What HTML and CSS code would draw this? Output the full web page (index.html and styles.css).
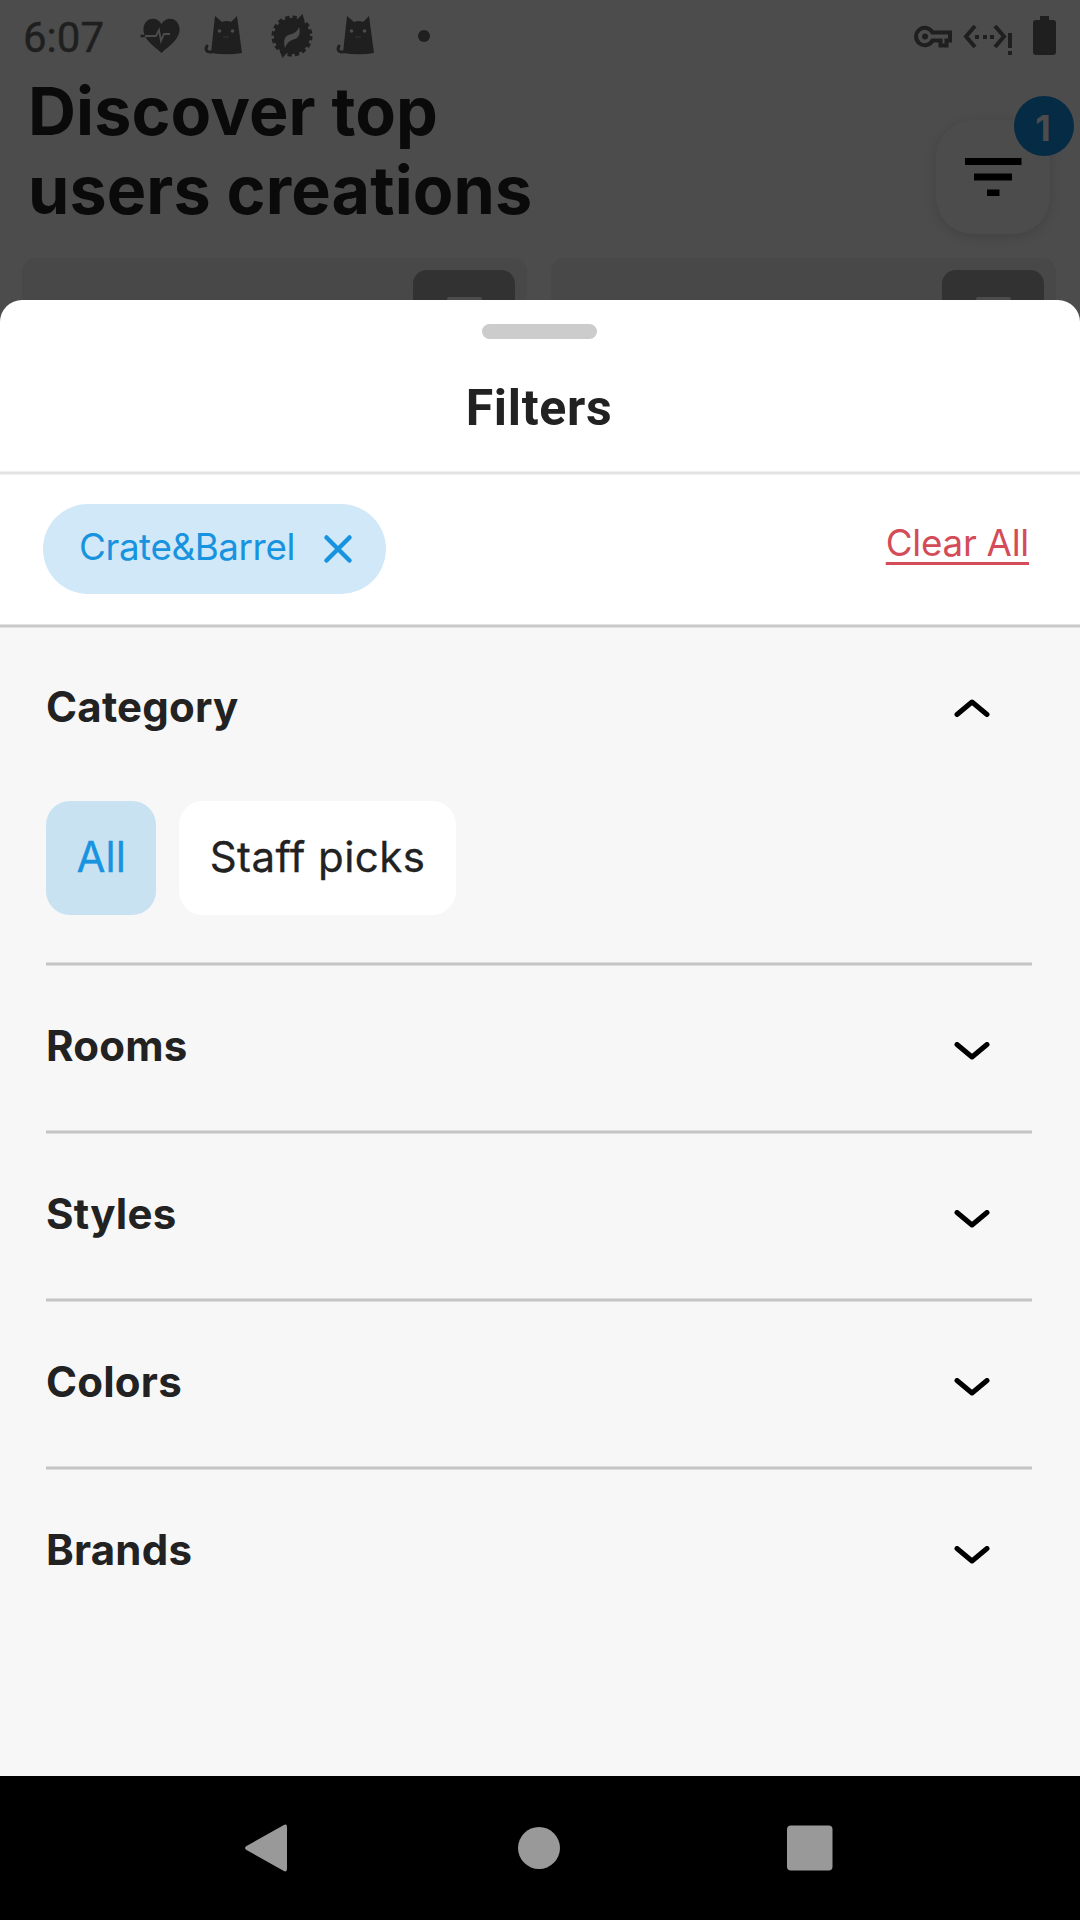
FILE: index.html
```html
<!DOCTYPE html>
<html lang="en">
<head>
<meta charset="utf-8">
<title>Filters</title>
<link rel="stylesheet" href="styles.css">
</head>
<body>
<main class="screen">
  <section class="backdrop">
    <div class="status">
      <span class="clock">6:07</span>
      <svg class="status-left" width="310" height="72" viewBox="0 0 310 72">
        <g fill="#1f1f1f">
          <path d="M41.500 53C34 46 22.500 39 23.500 28C25 17 37 16 41.500 24C46 16 58 17 59.500 28C60.500 39 49 46 41.500 53Z"/>
          <g id="cat">
            <path d="M91 53L95 16L102 22Q107 20 111 22L117 16L122 53Q107 55.500 91 53Z"/>
            <path d="M87 46Q84 52 91 52" fill="none" stroke="#1f1f1f" stroke-width="3" stroke-linecap="round"/>
            <circle cx="99.500" cy="31" r="1.800" fill="#4c4c4c"/><circle cx="112.500" cy="31" r="1.800" fill="#4c4c4c"/>
            <path d="M103 37H109" stroke="#2f2f2f" stroke-width="1.500"/>
          </g>
          <use href="#cat" x="132"/>
          <circle cx="172" cy="36" r="18"/>
          <circle cx="172" cy="36" r="18.500" fill="none" stroke="#1f1f1f" stroke-width="4" stroke-dasharray="4.200 3.064"/>
          <path d="M173 24L182.500 14L186 27ZM171 48L162.500 58L158 46Z"/>
          <circle cx="304" cy="36" r="6"/>
        </g>
        <path d="M20 36H36L39 30L41 41L44 34H50" fill="none" stroke="#4c4c4c" stroke-width="1.800"/>
        <path d="M20.500 36H25" stroke="#1f1f1f" stroke-width="2.500"/>
        <path d="M179 27Q182 38 172 40Q167 42 165 48Q162 36 170 34.500Q177 33 179 27Z" fill="#4c4c4c"/>
      </svg>
      <svg class="status-right" width="160" height="72" viewBox="0 0 160 72">
        <g fill="none" stroke="#1f1f1f" stroke-width="4">
          <path d="M32.500 32.500A8.700 8.700 0 1 0 32.500 40.500H40.500V45.500H46.500V40.500H50V32.500Z"/>
          <path d="M75 26L66 36.500L75 47M95 26L104 36.500L95 47"/>
        </g>
        <g fill="#1f1f1f">
          <circle cx="25" cy="36.500" r="3"/>
          <path d="M75 35h4v4h-4zM83 35h4v4h-4zM90 35h4v4h-4zM108 33h4v15h-4zM108 51h4v4h-4z"/>
          <path d="M140 16h9v4h4a3 3 0 0 1 3 3v29a3 3 0 0 1-3 3h-17a3 3 0 0 1-3-3v-29a3 3 0 0 1 3-3h4z"/>
        </g>
      </svg>
    </div>
    <div class="heading">
      <h1 class="title">Discover top<br>users creations</h1>
      <div class="filter-button">
        <svg width="58" height="40" viewBox="0 0 58 40"><path d="M1 1h56.500v7H1zM10 16.500h38v7H10zM23 32.500h12.500v6.500H23z"/></svg>
        <span class="badge">1</span>
      </div>
    </div>
    <div class="cards">
      <div class="card"><div class="card-action"><i class="dash"></i></div></div>
      <div class="card"><div class="card-action"><i class="dash"></i></div></div>
    </div>
  </section>
  <section class="sheet">
    <header class="sheet-head">
      <div class="handle"></div>
      <h2 class="sheet-title">Filters</h2>
    </header>
    <div class="applied">
      <div class="tag"><span class="tag-label">Crate&amp;Barrel</span>
        <svg width="30" height="30" viewBox="0 0 30 30"><path d="M3.500 3.500L26.500 26.500M26.500 3.500L3.500 26.500" fill="none" stroke="#1793e0" stroke-width="4.500" stroke-linecap="round"/></svg>
      </div>
      <a class="clear">Clear All</a>
    </div>
    <div class="groups">
      <div class="group">
        <div class="row first"><h3>Category</h3><svg class="chev" width="36" height="18" viewBox="0 0 36 18"><path d="M3 15.500L18 3L33 15.500"/></svg></div>
        <div class="chips"><span class="chip on">All</span><span class="chip">Staff picks</span></div>
      </div>
      <div class="group row"><h3>Rooms</h3><svg class="chev" width="36" height="18" viewBox="0 0 36 18"><path d="M3 2.500L18 15L33 2.500"/></svg></div>
      <div class="group row"><h3>Styles</h3><svg class="chev" width="36" height="18" viewBox="0 0 36 18"><path d="M3 2.500L18 15L33 2.500"/></svg></div>
      <div class="group row"><h3>Colors</h3><svg class="chev" width="36" height="18" viewBox="0 0 36 18"><path d="M3 2.500L18 15L33 2.500"/></svg></div>
      <div class="group row"><h3>Brands</h3><svg class="chev" width="36" height="18" viewBox="0 0 36 18"><path d="M3 2.500L18 15L33 2.500"/></svg></div>
    </div>
  </section>
  <nav class="navbar">
    <svg width="44" height="50" viewBox="0 0 44 50"><path d="M2.500 23L39 2.500Q43 0 43 4V46Q43 50 39 47.500L2.500 27Q-0.500 25 2.500 23Z"/></svg>
    <svg width="44" height="42" viewBox="0 0 44 42"><circle cx="23" cy="21" r="21"/></svg>
    <svg width="46" height="46" viewBox="0 0 46 46"><rect x="0" y="0.500" width="45.500" height="45" rx="4"/></svg>
  </nav>
</main>
</body>
</html>
```
FILE: styles.css
```css
* { box-sizing: border-box; margin: 0; padding: 0; }
body { background: #4c4c4c; font-family: Inter, "Liberation Sans", sans-serif; color: #222; }
.screen { width: 1080px; height: 1920px; display: flex; flex-direction: column; overflow: hidden; }

/* Dimmed page behind the sheet */
.backdrop { height: 322px; overflow: hidden; flex: none; }
.status { height: 72px; display: flex; padding: 0 20px 0 22px; }
.clock { font: 400 42px/75px Roboto, sans-serif; color: #1f1f1f; width: 98px; flex: none; padding-left: 1px; -webkit-text-stroke: .4px #1f1f1f; }
.status-left { margin-right: auto; }
.heading { height: 186px; display: flex; justify-content: space-between; padding: 0 30px 0 28px; }
.title { font-size: 66.4px; line-height: 79px; font-weight: 700; color: #0a0a0a; letter-spacing: .1px; }
.filter-button { position: relative; width: 114px; height: 114px; margin-top: 48px; border-radius: 37px; background: #4c4c4c; box-shadow: 0 3px 12px rgba(0, 0, 0, .13); display: flex; align-items: center; justify-content: center; }
.badge { position: absolute; right: -24px; top: -24px; width: 60px; height: 60px; border-radius: 50%; background: #062b45; color: #4c4c4c; font-size: 36px; font-weight: 700; line-height: 64px; text-align: center; padding-right: 2px; }
.cards { display: flex; gap: 24px; padding: 0 24px 0 22px; }
.card { flex: 1; height: 100px; border-radius: 14px; background: #484848; display: flex; justify-content: flex-end; padding: 12px; }
.card-action { width: 102px; height: 80px; border-radius: 14px; background: #323232; display: flex; justify-content: center; padding-top: 27px; }
.dash { width: 35px; height: 10px; background: #4c4c4c; border-radius: 2px; }

/* Bottom sheet */
.sheet { position: relative; margin-top: -22px; height: 1476px; flex: none; border-radius: 22px 22px 0 0; overflow: hidden; background: #fff; display: flex; flex-direction: column; }
.sheet-head, .applied, .group { background: linear-gradient(var(--edge) 1px, var(--line) 1px 3px, var(--edge) 3px) bottom / 100% 4px no-repeat; }
.sheet-head { --edge: #f0f0f0; --line: #e3e3e3; height: 175px; padding: 24px 2px 0 0; }
.handle { width: 115px; height: 15px; border-radius: 8px; background: #ccc; margin: 0 auto; }
.sheet-title { font: 700 50px/60px Roboto, sans-serif; letter-spacing: .7px; text-align: center; margin-top: 39px; }
.applied { --edge: #e2e2e2; --line: #c8c8c8; height: 153px; display: flex; justify-content: space-between; padding: 29px 51px 0 43px; }
.tag { width: 343px; height: 90px; border-radius: 45px; background: #d0e8f7; color: #1793e0; font-size: 36.75px; letter-spacing: -.4px; display: flex; align-items: center; justify-content: space-between; padding: 0 33px 0 36px; }
.tag-label { padding-bottom: 5px; }
.clear { color: #d34c57; font-size: 36.75px; letter-spacing: -.25px; line-height: 77px; text-decoration: underline; text-decoration-thickness: 3px; text-underline-offset: 6px; text-decoration-skip-ink: none; }
.groups { background: #f7f7f7; flex: 1; padding: 0 48px 0 46px; }
.group { --edge: #dedede; --line: #c4c4c4; }
.group:last-child { background: none; }
.row { height: 168px; display: flex; align-items: center; justify-content: space-between; padding-right: 42px; }
.row.first { height: 163px; margin-bottom: 10px; }
.row.first .chev { margin: 0 0 3px; }
h3 { font-size: 42px; font-weight: 700; letter-spacing: .22px; padding-bottom: 9px; }
.row.first h3 { padding-bottom: 6px; }
.chev { margin-top: 1px; }
.chev path { fill: none; stroke: #000; stroke-width: 5; stroke-linecap: round; stroke-linejoin: round; }
.chips { display: flex; gap: 23px; padding-bottom: 51px; }
.chip { height: 114px; padding: 0 30.5px; border-radius: 24px; background: #fff; font-size: 42px; letter-spacing: .45px; line-height: 112px; -webkit-text-stroke: .3px currentColor; }
.chip.on { background: #c9e2f2; color: #1793e0; padding: 0 30px 0 30.5px; letter-spacing: .1px; }

/* System navigation */
.navbar { flex: 1; background: #000; display: flex; align-items: center; justify-content: space-between; padding: 0 247px 0 244px; }
.navbar svg { fill: #999; }
```
